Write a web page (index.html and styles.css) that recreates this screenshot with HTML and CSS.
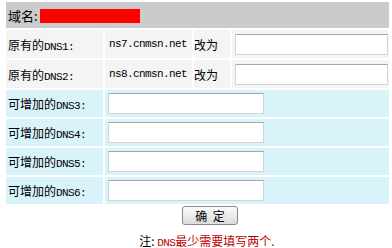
FILE: index.html
```
<html>
<head>
<title>DNS</title>
<link rel="stylesheet" href="styles.css">
</head>
<body>
<form class="dnsform">
<table class="dnstab">
<colgroup>
<col class="c1"><col class="c2"><col class="c3"><col class="c4">
</colgroup>
<tr class="head">
<td colspan="4">域名:<span class="hide"></span></td>
</tr>
<tr class="old">
<td>原有的<span class="en">DNS1:</span></td>
<td><span class="en">ns7.cnmsn.net</span></td>
<td>改为</td>
<td><input type="text" class="txt"></td>
</tr>
<tr class="old">
<td>原有的<span class="en">DNS2:</span></td>
<td><span class="en">ns8.cnmsn.net</span></td>
<td>改为</td>
<td><input type="text" class="txt"></td>
</tr>
<tr class="add">
<td>可增加的<span class="en">DNS3:</span></td>
<td colspan="3"><input type="text" class="txt add"></td>
</tr>
<tr class="add">
<td>可增加的<span class="en">DNS4:</span></td>
<td colspan="3"><input type="text" class="txt add"></td>
</tr>
<tr class="add">
<td>可增加的<span class="en">DNS5:</span></td>
<td colspan="3"><input type="text" class="txt add"></td>
</tr>
<tr class="add">
<td>可增加的<span class="en">DNS6:</span></td>
<td colspan="3"><input type="text" class="txt add"></td>
</tr>
</table>
<div class="bottom">
<button type="button" class="btn">确&nbsp;&nbsp;定</button>
<div class="note">注:&nbsp;<span class="red"><span class="en">DNS</span>最少需要填写两个.</span></div>
</div>
</form>
</body>
</html>
```

FILE: styles.css
```
body { margin:0; background:#fff; color:#000; font-family:"Noto Sans CJK SC", "Liberation Sans", sans-serif; font-size:12px; }
.dnsform { margin:0 0 0 4px; }
.dnstab { width:386px; table-layout:fixed; border-collapse:separate; border-spacing:2px; font-size:12px; }
.dnstab td { padding:0 0 0 2px; white-space:nowrap; }
.c1 { width:97px; }
.c2 { width:87px; }
.c3 { width:36px; }
.c4 { width:157px; }
.head td { background:#cbcbcb; height:26px; font-size:13px; }
.hide { display:inline-block; width:100px; height:14px; background:#ff0000; vertical-align:-2px; margin-left:2px; }
.old td { background:#f4f4f4; height:28px; }
.add td { background:#d9f3fa; height:27px; }
.en { font-family:"Liberation Mono", monospace; font-size:11px; letter-spacing:-0.6px; }
.old td:nth-child(2) { padding-left:4px; }
.old td:nth-child(3) { padding-left:0; }
.txt { width:153px; height:21px; margin:0 0 0 1px; padding:0; border:1px solid #d4d4d4; border-top-color:#a6a6a6; background:#fff; vertical-align:middle; }
.txt.add { width:156px; margin-left:1px; }
.bottom { text-align:center; margin-top:0; }
.btn { width:56px; height:19px; padding:0; font-family:"Noto Sans CJK SC", sans-serif; font-size:12px; line-height:15px; color:#000; border:1px solid #8a8a8a; border-radius:3px; background:linear-gradient(#fbfbfb, #dcdcdc); margin-left:24px; }
.note { margin-top:7px; padding-left:18px; }
.red { color:#c00000; }
```
